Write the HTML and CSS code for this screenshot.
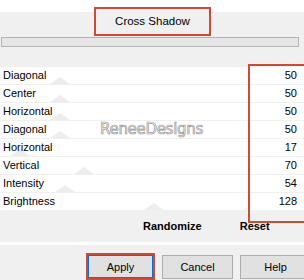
FILE: index.html
```html
<!DOCTYPE html>
<html lang="en">
<head>
    <meta charset="UTF-8">
    <title>Cross Shadow</title>
    <link rel="stylesheet" href="styles.css">
</head>
<body>
    <div class="dialog">
        <div class="header">
            <div class="title">Cross Shadow</div>
        </div>
        <div class="progress"></div>

        <div class="rows">
            <div class="row" style="--v: 50"><span>Diagonal</span><span class="value">50</span></div>
            <div class="row" style="--v: 50"><span>Center</span><span class="value">50</span></div>
            <div class="row" style="--v: 50"><span>Horizontal</span><span class="value">50</span></div>
            <div class="row" style="--v: 50"><span>Diagonal</span><span class="value">50</span></div>
            <div class="row" style="--v: 17"><span>Horizontal</span><span class="value">17</span></div>
            <div class="row" style="--v: 70"><span>Vertical</span><span class="value">70</span></div>
            <div class="row" style="--v: 54"><span>Intensity</span><span class="value">54</span></div>
            <div class="row" style="--v: 128"><span>Brightness</span><span class="value">128</span></div>
            <div class="watermark">ReneeDesigns</div>
        </div>

        <div class="actions">
            <span>Randomize</span>
            <span>Reset</span>
        </div>
        <div class="highlight"></div>

        <div class="buttons">
            <div class="mark"><button class="btn default">Apply</button></div>
            <button class="btn">Cancel</button>
            <button class="btn">Help</button>
        </div>
    </div>
</body>
</html>
```

FILE: styles.css
```css
body {
    margin: 0;
    width: 304px;
    height: 280px;
    overflow: hidden;
    background: #f0f0f0;
    font-family: 'Liberation Sans', Arial, sans-serif;
    font-size: 11px;
    color: #000;
}
.dialog {
    position: relative;
    height: 280px;
}
.header {
    padding: 7px 0 0 94px;
    background: linear-gradient(#fff 12px, #f0f0f0 12px);
    border-top: 1px dotted #c8c8c8;
    margin-top: -1px;
}
.title {
    width: 113px;
    height: 25px;
    line-height: 25px;
    border: 2px solid #cc4b37;
    background: #f0f0f0;
    text-align: center;
    font-size: 11.5px;
}
.progress {
    margin: 1px 5px 0 1px;
    height: 8px;
    border: 1px solid #b4b4b4;
    background: #e6e6e6;
}
.rows {
    position: relative;
    margin-top: 20px;
}
.row {
    position: relative;
    display: flex;
    justify-content: space-between;
    height: 17px;
    line-height: 17px;
    margin-bottom: 1px;
    padding: 0 7px 0 3px;
    background: #fff;
    overflow: hidden;
}
.row::after {
    content: "";
    position: absolute;
    bottom: 0;
    left: calc(var(--v) * 1.2px - 10px);
    border-left: 10px solid transparent;
    border-right: 10px solid transparent;
    border-bottom: 7px solid #ededed;
}
.row span {
    position: relative;
    z-index: 1;
}
.watermark {
    position: absolute;
    left: 100px;
    top: 53px;
    font-family: 'DejaVu Sans', sans-serif;
    font-size: 15px;
    color: #f2f2f2;
    -webkit-text-stroke: 0.7px #9a9a9a;
    letter-spacing: -0.3px;
    z-index: 2;
}
.actions {
    display: flex;
    gap: 38px;
    height: 31px;
    line-height: 31px;
    padding-left: 143px;
    font-weight: bold;
}
.highlight {
    position: absolute;
    left: 248px;
    top: 65px;
    width: 60px;
    height: 155px;
    border: 2px solid #cc4b37;
}
.buttons {
    display: flex;
    gap: 7px;
    padding: 8px 0 0 86px;
    border-top: 3px solid #fff;
}
.mark {
    border: 2px solid #cc4b37;
}
.btn {
    width: 71px;
    height: 24px;
    margin-top: 2px;
    border: 1px solid #adadad;
    background: #e1e1e1;
    font-family: 'Liberation Sans', Arial, sans-serif;
    font-size: 11px;
    padding: 0;
    flex-shrink: 0;
}
.btn.default {
    width: 65px;
    height: 23px;
    margin: 0;
    display: block;
    border-color: #0078d7;
}
```
